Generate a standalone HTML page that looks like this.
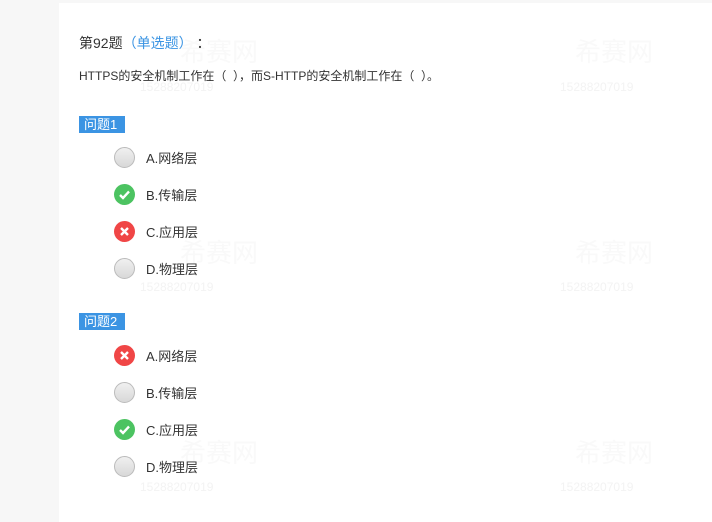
<!DOCTYPE html>
<html><head><meta charset="utf-8"><style>
body{margin:0;width:712px;height:522px;background:#f7f7f7;font-family:"Liberation Sans","Noto Sans CJK SC",sans-serif;overflow:hidden;position:relative}
.panel{position:absolute;left:59px;top:3px;width:653px;height:519px;background:#fff}
.t{position:absolute;white-space:nowrap;color:#333}
.tag{position:absolute;left:79px;width:46px;height:17px;background:#3b94e3;color:#fff;font-size:13px;line-height:17px;text-indent:5px}
.ic{position:absolute;left:114px;width:21px;height:21px;border-radius:50%;box-sizing:border-box}
.n{background:linear-gradient(#f0f0f0,#d8d8d8);border:1px solid #bbb}
.ok{background:#4cc361}.no{background:#f04646}
.ic svg{position:absolute;left:0;top:0}
.op{position:absolute;left:146px;font-size:13px;color:#333}
.wm{position:absolute;color:#f9f9f9;font-size:26px}
.wn{position:absolute;color:#f3f3f3;font-size:12px}
</style></head><body>
<div class="panel"></div>
<div class="wm" style="left:180px;top:32px">希赛网</div><div class="wn" style="left:140px;top:80px">15288207019</div>
<div class="wm" style="left:575px;top:32px">希赛网</div><div class="wn" style="left:560px;top:80px">15288207019</div>
<div class="wm" style="left:180px;top:233px">希赛网</div><div class="wn" style="left:140px;top:280px">15288207019</div>
<div class="wm" style="left:575px;top:233px">希赛网</div><div class="wn" style="left:560px;top:280px">15288207019</div>
<div class="wm" style="left:180px;top:433px">希赛网</div><div class="wn" style="left:140px;top:480px">15288207019</div>
<div class="wm" style="left:575px;top:433px">希赛网</div><div class="wn" style="left:560px;top:480px">15288207019</div>
<div class="t" style="left:79px;top:33px;font-size:14px">第92题<span style="color:#3b94e3">（单选题）</span>&nbsp;：</div>
<div class="t" style="left:79px;top:67px;font-size:12px">HTTPS的安全机制工作在（&nbsp;&nbsp;），而S-HTTP的安全机制工作在（&nbsp;&nbsp;）。</div>
<div class="tag" style="top:116px">问题1</div>
<div class="ic n" style="top:147px"></div><div class="op" style="top:148px">A.网络层</div>
<div class="ic ok" style="top:184px"><svg width="21" height="21"><path d="M6 11l3 3 6-6.5" stroke="#fff" stroke-width="2.4" fill="none"/></svg></div><div class="op" style="top:185px">B.传输层</div>
<div class="ic no" style="top:221px"><svg width="21" height="21"><path d="M7 7l7 7M14 7l-7 7" stroke="#fff" stroke-width="2.4"/></svg></div><div class="op" style="top:222px">C.应用层</div>
<div class="ic n" style="top:258px"></div><div class="op" style="top:259px">D.物理层</div>
<div class="tag" style="top:313px">问题2</div>
<div class="ic no" style="top:345px"><svg width="21" height="21"><path d="M7 7l7 7M14 7l-7 7" stroke="#fff" stroke-width="2.4"/></svg></div><div class="op" style="top:346px">A.网络层</div>
<div class="ic n" style="top:382px"></div><div class="op" style="top:383px">B.传输层</div>
<div class="ic ok" style="top:419px"><svg width="21" height="21"><path d="M6 11l3 3 6-6.5" stroke="#fff" stroke-width="2.4" fill="none"/></svg></div><div class="op" style="top:420px">C.应用层</div>
<div class="ic n" style="top:456px"></div><div class="op" style="top:457px">D.物理层</div>
</body></html>
